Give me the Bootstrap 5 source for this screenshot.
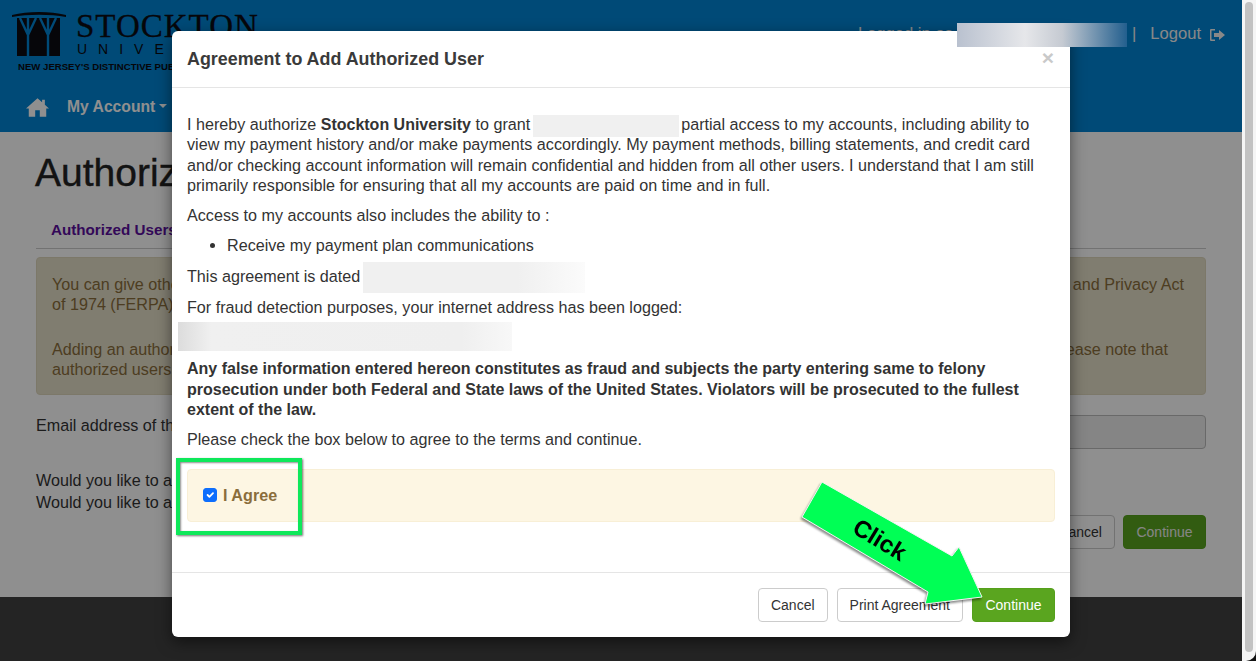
<!DOCTYPE html>
<html lang="en">
<head>
    <meta charset="UTF-8">
    <title>Agreement to Add Authorized User</title>
    <link href="https://cdn.jsdelivr.net/npm/bootstrap@5.3.0/dist/css/bootstrap.min.css" rel="stylesheet">
    <style>
        html, body { height: 100%; overflow: hidden; }
        body { font-family: "Liberation Sans", Arial, sans-serif; font-size: 16.15px; line-height: 20.3px; color: #333; background: #111; }
        .window-clip { height: 661px; border-bottom-right-radius: 10px; overflow: hidden; }
        .page-wrap { width: 1242px; height: 661px; }
        .top-bar { height: 132px; background: #0084d4; }
        .brand-row { height: 80px; padding: 11px 0 0 12px; }
        .logo-name { font-family: "Liberation Serif", serif; font-size: 33px; line-height: 30px; color: #0b0b12; letter-spacing: 1px; -webkit-text-stroke: .3px #0b0b12; }
        .logo-sub { font-size: 14px; line-height: 17px; letter-spacing: 11px; color: #0b0b12; padding-left: 1px; }
        .logo-tag { font-size: 9.6px; line-height: 12px; font-weight: 700; color: #0b0b12; padding: 3px 0 0 6px; white-space: nowrap; }
        .user-row { padding: 13px 0 0 0; color: #f2f2f2; font-size: 16.6px; }
        .user-gap { width: 170px; margin: 0 7px 0 2px; }
        .user-sep { margin-right: 14px; }
        .user-blur { position: absolute; left: 957px; top: 23px; width: 170px; height: 24px; background: linear-gradient(90deg, #b9c1cf 0%, #e6e7ea 40%, #c5cad2 62%, #235f8e 100%); }
        .nav-row { height: 52px; padding: 2px 0 0 26px; color: #fff; font-weight: 700; font-size: 15.7px; }
        .nav-label { margin-left: 2px; }
        .page-body { height: 465px; background: #fff; padding: 0 36px; }
        .page-title { font-size: 39px; line-height: 44px; font-weight: 500; margin: 19px 0 0 -1px; color: #222; -webkit-text-stroke: .4px #222; }
        .tab-row { margin-top: 16px; height: 38px; border-bottom: 1px solid #ccc; padding: 8px 15px 0; }
        .tab-row a { color: #5b0f9e; font-weight: 700; font-size: 15.2px; text-decoration: none; }
        .note-box { margin-top: 8px; height: 138px; padding: 16px 21px 0 15px; background: #e4dfc8; border: 1px solid #ddd6bc; border-radius: 4px; color: #8a6d3b; }
        .note-gap { height: 24px; }
        .note-end { margin-right: 16px; }
        .email-row { margin-top: 20px; height: 34px; }
        .email-input { width: 700px; height: 34px; background: #eee; border: 1px solid #bbb; border-radius: 4px; }
        .ask-lines { margin-top: 20px; line-height: 22px; }
        .page-btns { margin-top: 2px; }
        .foot-bar { flex: 1; background: #404040; }
        .scroll-track { width: 14px; background: #f5f5f5; padding: 2px 3px 9px; }
        .scroll-thumb { height: 100%; border-radius: 4px; background: #c2c2c2; }
        .page-dim { position: absolute; inset: 0; background: rgba(0, 0, 0, .44); }
        .btn-plain { height: 34px; padding: 0 12px; font-size: 14px; line-height: 32px; color: #333; background: #fff; border: 1px solid #ccc; border-radius: 4px; }
        .btn-go { height: 34px; padding: 0 12.5px; font-size: 14px; line-height: 32px; color: #fff; background: #5aa51f; border: 1px solid #55a01c; border-radius: 4px; }
        .btn-go-dim { color: #eee; }
        .agree-modal { width: 898px; height: 606px; top: 31px; left: 172px; position: absolute; background: #fff; border-radius: 6px; box-shadow: 0 5px 15px rgba(0, 0, 0, .5); }
        .agree-head { height: 57px; padding: 2px 15px 0; border-bottom: 1px solid #e5e5e5; }
        .agree-title { font-size: 17.9px; font-weight: 700; color: #3a3a3a; margin: 0; }
        .agree-close { border: 0; padding: 0; background: none; font-size: 21px; font-weight: 700; color: #c9c9c9; line-height: 20px; margin: -5px 1px 0 0; }
        .agree-body { padding: 26px 15px 0; height: 484px; }
        .agree-body p { margin: 0 0 10px; }
        .agree-body b { font-size: 16px; line-height: 1; }
        .agree-body ul { margin: 0 0 10px; padding-left: 40px; }
        .blur-name { display: inline-block; width: 146px; height: 22px; margin: -4px -2px -4px -2px; background: #f0f0f0; vertical-align: middle; }
        .blur-date { display: inline-block; width: 222px; height: 31px; margin: -6px 0 -6px -2px; background: linear-gradient(90deg, #f0f0f0 70%, #fbfbfb 100%); vertical-align: middle; }
        .blur-ip { width: 334px; height: 29px; margin: -5px 0 7px -9px; background: linear-gradient(90deg, #dcdcdc 0%, #f0f0f0 10%, #efefef 85%, #f8f8f8 100%); }
        .agree-check { margin-top: 19px; height: 53px; padding: 0 15px; background: #fdf6e3; border: 1px solid #f8efd6; border-radius: 4px; color: #8a6d3b; font-weight: 700; }
        .agree-check .form-check-input { width: 14px; height: 14px; margin: 0 6px 0 0; border-radius: 3px; }
        .agree-foot { height: 65px; padding: 15px 15px 0; border-top: 1px solid #e5e5e5; gap: 9px; }
        .mark-box { position: absolute; left: 176px; top: 458px; width: 126px; height: 77px; border: 4px solid #0ee85a; box-shadow: 1px 1px 2px rgba(0, 0, 0, .55), inset 1px 1px 2px rgba(0, 0, 0, .45); }
        .mark-arrow { position: absolute; left: 790px; top: 470px; filter: drop-shadow(-1px 2px 1px rgba(0, 0, 0, .45)); }
    </style>
</head>
<body>
<div class="window-clip d-flex">
    <div class="page-wrap position-relative d-flex flex-column">
        <div class="top-bar">
            <div class="brand-row d-flex justify-content-between">
                <div class="d-flex flex-column">
                    <div class="d-flex gap-2">
                        <svg width="56" height="46" viewBox="0 0 56 46">
                            <path d="M0 4C16 0 38 0 54 4L54 6C38 3 16 3 0 6Z" fill="#0b0b12"/>
                            <rect x="5" y="7" width="43" height="38" fill="#0b0b12"/>
                            <g stroke="#0084d4" stroke-width="2.4" fill="none">
                                <path d="M16 45V24L8 7M16 24L16 7M16 24L24 7"/>
                                <path d="M36 45V24L28 7M36 24L36 7M36 24L44 7"/>
                            </g>
                        </svg>
                        <div>
                            <div class="logo-name">STOCKTON</div>
                            <div class="logo-sub">UNIVERSITY</div>
                        </div>
                    </div>
                    <div class="logo-tag">NEW JERSEY'S DISTINCTIVE PUBLIC UNIVERSITY</div>
                </div>
                <div class="user-row d-flex align-items-start">
                    <span>Logged in as</span>
                    <div class="user-gap"></div>
                    <span class="user-sep">|</span>
                    <span>Logout</span>
                    <svg class="ms-2 me-3 mt-1" width="17" height="14" viewBox="0 0 17 14" fill="#f2f2f2">
                        <path d="M6 1H2Q1 1 1 2V12Q1 13 2 13H6V11.5H2.500V2.500H6ZM10 2V5H5V9H10V12L16 7Z"/>
                    </svg>
                </div>
            </div>
            <div class="nav-row d-flex align-items-center">
                <svg class="me-3" width="23" height="19" viewBox="0 0 25 20" fill="#fff">
                    <path d="M12.500 0L0 11H3V20H10V13H15V20H22V11H25L20.500 7V1.500H17.500V4.400Z"/>
                </svg>
                <span class="nav-label">My Account</span>
                <span class="dropdown-toggle ms-1"></span>
            </div>
        </div>
        <div class="page-body">
            <h1 class="page-title">Authorized Users</h1>
            <div class="tab-row"><a href="#">Authorized Users</a></div>
            <div class="note-box">
                <div class="d-flex justify-content-between"><span>You can give others access to your account under the Family Educational Rights</span><span>and Privacy Act</span></div>
                <div>of 1974 (FERPA), by adding them as an authorized user.</div>
                <div class="note-gap"></div>
                <div class="d-flex justify-content-between"><span>Adding an authorized user</span><span class="note-end">Please note that</span></div>
                <div>authorized users</div>
            </div>
            <div class="email-row d-flex justify-content-between align-items-start">
                <span>Email address of the authorized user</span>
                <div class="email-input"></div>
            </div>
            <div class="ask-lines">
                <div>Would you like to allow access</div>
                <div>Would you like to allow access</div>
            </div>
            <div class="page-btns d-flex justify-content-end gap-2">
                <button class="btn-plain">Cancel</button>
                <button class="btn-go btn-go-dim">Continue</button>
            </div>
        </div>
        <div class="foot-bar"></div>
        <div class="page-dim"></div>
    </div>
    <div class="scroll-track"><div class="scroll-thumb"></div></div>
</div>

<div class="agree-modal">
    <div class="agree-head d-flex justify-content-between align-items-center">
        <h5 class="agree-title">Agreement to Add Authorized User</h5>
        <button class="agree-close">×</button>
    </div>
    <div class="agree-body">
        <p>I hereby authorize <b>Stockton University</b> to grant <span class="blur-name"></span> partial access to my accounts, including ability to view my payment history and/or make payments accordingly. My payment methods, billing statements, and credit card and/or checking account information will remain confidential and hidden from all other users. I understand that I am still primarily responsible for ensuring that all my accounts are paid on time and in full.</p>
        <p>Access to my accounts also includes the ability to :</p>
        <ul>
            <li>Receive my payment plan communications</li>
        </ul>
        <p>This agreement is dated <span class="blur-date"></span></p>
        <p>For fraud detection purposes, your internet address has been logged:</p>
        <div class="blur-ip"></div>
        <p><b>Any false information entered hereon constitutes as fraud and subjects the party entering same to felony prosecution under both Federal and State laws of the United States. Violators will be prosecuted to the fullest<br>extent of the law.</b></p>
        <p>Please check the box below to agree to the terms and continue.</p>
        <div class="agree-check d-flex align-items-center">
            <input class="form-check-input" type="checkbox" checked>
            <span>I Agree</span>
        </div>
    </div>
    <div class="agree-foot d-flex justify-content-end">
        <button class="btn-plain">Cancel</button>
        <button class="btn-plain">Print Agreement</button>
        <button class="btn-go">Continue</button>
    </div>
</div>

<div class="user-blur"></div>
<div class="mark-box"></div>
<svg class="mark-arrow" width="200" height="140" viewBox="790 470 200 140">
    <polygon points="822,482 952,556 959,547 982,597 925,604 928,592 802,517" fill="#00ff55" stroke="#f4f4f4" stroke-width="1"/>
    <text x="0" y="0" transform="translate(851,532) rotate(31)" font-family="Liberation Sans, Arial, sans-serif" font-size="24" font-weight="700" fill="#000">Click</text>
</svg>
</body>
</html>
